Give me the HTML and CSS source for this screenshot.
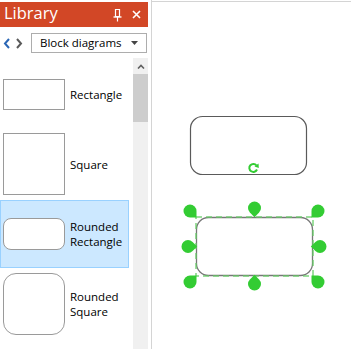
FILE: index.html
```html
<!DOCTYPE html>
<html lang="en">
<head>
    <meta charset="UTF-8">
    <title>Library</title>
    <link rel="stylesheet" href="styles.css">
</head>
<body>
    <div class="app">
        <div class="library">
            <div class="library-header">
                <span class="library-title">Library</span>
                <span class="header-tools">
                    <svg class="pin" width="9" height="13" viewBox="0 0 9 13">
                        <path d="M2.5 0.5 H6.5 V7.5 H2.5 Z" fill="none" stroke="#fff" stroke-width="1.2"/>
                        <path d="M0.5 8 H8.5" stroke="#fff" stroke-width="1.4"/>
                        <path d="M4.5 8 V12.5" stroke="#fff" stroke-width="1.2"/>
                    </svg>
                    <svg class="close" width="9" height="9" viewBox="0 0 9 9">
                        <path d="M1 1 L8 8 M8 1 L1 8" stroke="#fff" stroke-width="1.6"/>
                    </svg>
                </span>
            </div>

            <div class="nav-row">
                <svg class="nav-arrow" width="8" height="11" viewBox="0 0 8 11">
                    <path d="M6 1 L2 5.5 L6 10" fill="none" stroke="#2a66b5" stroke-width="2"/>
                </svg>
                <svg class="nav-arrow" width="8" height="11" viewBox="0 0 8 11">
                    <path d="M2 1 L6 5.5 L2 10" fill="none" stroke="#5a5a5a" stroke-width="2"/>
                </svg>
                <div class="dropdown">
                    <span>Block diagrams</span>
                    <svg width="7" height="4" viewBox="0 0 7 4">
                        <path d="M0 0 H7 L3.5 4 Z" fill="#444"/>
                    </svg>
                </div>
            </div>

            <div class="list-area">
                <ul class="shape-list">
                    <li class="shape-item">
                        <div class="thumb thumb-rect"></div>
                        <span class="shape-label">Rectangle</span>
                    </li>
                    <li class="shape-item">
                        <div class="thumb thumb-square"></div>
                        <span class="shape-label">Square</span>
                    </li>
                    <li class="shape-item selected">
                        <div class="thumb thumb-rounded-rect"></div>
                        <span class="shape-label">Rounded<br>Rectangle</span>
                    </li>
                    <li class="shape-item">
                        <div class="thumb thumb-rounded-square"></div>
                        <span class="shape-label">Rounded<br>Square</span>
                    </li>
                </ul>
                <div class="scrollbar">
                    <div class="scroll-up">
                        <svg width="8" height="5" viewBox="0 0 8 5">
                            <path d="M1 4.5 L4 1.5 L7 4.5" fill="none" stroke="#606060" stroke-width="1.6"/>
                        </svg>
                    </div>
                    <div class="scroll-thumb"></div>
                </div>
            </div>
        </div>

        <div class="canvas">
            <svg class="drawing" width="199" height="347" viewBox="152 2 199 347">
                <!-- plain shape -->
                <rect x="190.5" y="116.5" width="116" height="58" rx="12" fill="#fff" stroke="#5a5a5a" stroke-width="1.2"/>
                <g fill="none" stroke="#33cc33" stroke-width="2">
                    <path d="M256.5 165.5 A4 4 0 1 0 257 169.5"/>
                </g>
                <path d="M254.5 166.5 L258.5 163.5 L258.8 168 Z" fill="#33cc33"/>

                <!-- selected shape -->
                <rect x="196.5" y="217.5" width="116" height="58" rx="12" fill="#fff" stroke="#777" stroke-width="1.3"/>
                <rect x="196" y="217" width="117" height="59" fill="none" stroke="#66cc66" stroke-width="1.5" stroke-dasharray="6 4" opacity="0.85"/>

                <g fill="#33cc33">
                    <path transform="translate(190 211) rotate(0)" d="M6.5 0 L6.5 6.5 L0 6.5 A6.5 6.5 0 1 1 6.5 0 Z"/>
                    <path transform="translate(254.5 208) rotate(45)" d="M6.5 0 L6.5 6.5 L0 6.5 A6.5 6.5 0 1 1 6.5 0 Z"/>
                    <path transform="translate(318 211) rotate(90)" d="M6.5 0 L6.5 6.5 L0 6.5 A6.5 6.5 0 1 1 6.5 0 Z"/>
                    <path transform="translate(188 246.5) rotate(-45)" d="M6.5 0 L6.5 6.5 L0 6.5 A6.5 6.5 0 1 1 6.5 0 Z"/>
                    <path transform="translate(320 246.5) rotate(135)" d="M6.5 0 L6.5 6.5 L0 6.5 A6.5 6.5 0 1 1 6.5 0 Z"/>
                    <path transform="translate(190 282) rotate(-90)" d="M6.5 0 L6.5 6.5 L0 6.5 A6.5 6.5 0 1 1 6.5 0 Z"/>
                    <path transform="translate(254.5 284) rotate(-135)" d="M6.5 0 L6.5 6.5 L0 6.5 A6.5 6.5 0 1 1 6.5 0 Z"/>
                    <path transform="translate(318 282) rotate(180)" d="M6.5 0 L6.5 6.5 L0 6.5 A6.5 6.5 0 1 1 6.5 0 Z"/>
                </g>
            </svg>
        </div>
    </div>
</body>
</html>
```

FILE: styles.css
```css
body {
    margin: 0;
    font-family: 'Segoe UI', 'Open Sans', sans-serif;
    background-color: #fff;
    overflow: hidden;
}

.app {
    display: flex;
    height: 349px;
}

.library {
    width: 151px;
    border-right: 1px solid #d4d4d4;
    display: flex;
    flex-direction: column;
}

.library-header {
    margin-top: 2px;
    width: 148px;
    height: 25px;
    background-color: #d24726;
    color: #fff;
    display: flex;
    align-items: center;
    justify-content: space-between;
    box-sizing: border-box;
    padding: 0 7px 0 4px;
}

.library-title {
    font-size: 16.5px;
    line-height: 1;
    margin-top: -2px;
}

.header-tools {
    display: flex;
    align-items: center;
    gap: 10px;
}

.pin {
    margin-top: 1px;
}

.nav-row {
    height: 31px;
    display: flex;
    align-items: center;
    padding-left: 3px;
    gap: 4px;
}

.nav-arrow {
    margin-top: 2px;
}

.dropdown {
    margin-left: 4px;
    width: 116px;
    height: 20px;
    box-sizing: border-box;
    border: 1px solid #adadad;
    display: flex;
    align-items: center;
    justify-content: space-between;
    padding: 0 8px 0 8px;
    font-size: 11.5px;
    color: #000;
}

.list-area {
    flex: 1;
    display: flex;
    min-height: 0;
}

.shape-list {
    list-style: none;
    margin: 0;
    padding: 2px 0 0 0;
    width: 133px;
    display: flex;
    flex-direction: column;
    gap: 2px;
}

.shape-item {
    width: 129px;
    height: 68px;
    box-sizing: border-box;
    border: 1px solid transparent;
    display: flex;
    align-items: center;
    padding-left: 2px;
    flex-shrink: 0;
}

.shape-item.selected {
    background-color: #cce8ff;
    border-color: #99d1ff;
}

.thumb {
    width: 62px;
    box-sizing: border-box;
    border: 1px solid #9a9a9a;
    background-color: #fff;
    flex-shrink: 0;
}

.thumb-rect {
    height: 31px;
}

.thumb-square {
    height: 62px;
}

.thumb-rounded-rect {
    height: 32px;
    border-radius: 8px;
}

.thumb-rounded-square {
    height: 62px;
    border-radius: 13px;
}

.shape-label {
    margin-left: 5px;
    font-size: 11.5px;
    line-height: 15px;
    color: #000;
}

.scrollbar {
    width: 15px;
    background-color: #f0f0f0;
}

.scroll-up {
    height: 16px;
    display: flex;
    align-items: center;
    justify-content: center;
}

.scroll-thumb {
    margin-top: 0;
    height: 48px;
    background-color: #cdcdcd;
}

.canvas {
    flex: 1;
    margin-top: 1px;
    border-top: 1px solid #d4d4d4;
    overflow: hidden;
}

.drawing {
    display: block;
}
```
